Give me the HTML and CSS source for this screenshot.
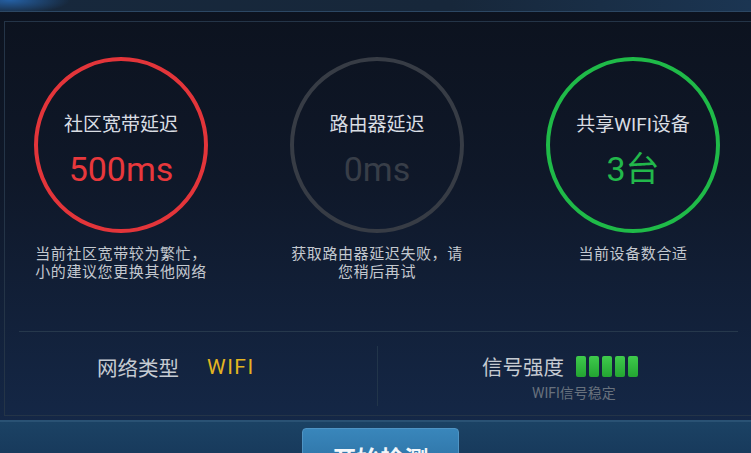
FILE: index.html
```html
<!DOCTYPE html>
<html lang="zh-CN">
<head>
    <meta charset="UTF-8">
    <meta name="viewport" content="width=device-width, initial-scale=1.0">
    <title>网络检测</title>
    <link rel="stylesheet" href="styles.css">
</head>
<body>
    <div class="topbar"></div>

    <div class="panel">
        <div class="gauges">
            <div class="gauge">
                <div class="ring ring-red">
                    <span class="ring-title">社区宽带延迟</span>
                    <span class="ring-value">500ms</span>
                </div>
                <p class="gauge-desc">当前社区宽带较为繁忙，<br>小的建议您更换其他网络</p>
            </div>
            <div class="gauge">
                <div class="ring ring-grey">
                    <span class="ring-title">路由器延迟</span>
                    <span class="ring-value">0ms</span>
                </div>
                <p class="gauge-desc">获取路由器延迟失败，请<br>您稍后再试</p>
            </div>
            <div class="gauge">
                <div class="ring ring-green">
                    <span class="ring-title">共享WIFI设备</span>
                    <span class="ring-value">3台</span>
                </div>
                <p class="gauge-desc">当前设备数合适</p>
            </div>
        </div>

        <div class="divider"></div>

        <div class="info-row">
            <div class="info-cell info-type">
                <span class="info-label">网络类型</span>
                <span class="info-value">WIFI</span>
            </div>
            <div class="info-sep"></div>
            <div class="info-cell info-signal">
                <div class="signal-line">
                    <span class="info-label">信号强度</span>
                    <span class="bars">
                        <i></i><i></i><i></i><i></i><i></i>
                    </span>
                </div>
                <span class="signal-note">WIFI信号稳定</span>
            </div>
        </div>
    </div>

    <div class="footer">
        <button class="start-btn">开始检测</button>
    </div>
</body>
</html>
```

FILE: styles.css
```css
body {
    margin: 0;
    width: 751px;
    height: 453px;
    overflow: hidden;
    font-family: Roboto, "Noto Sans CJK SC", sans-serif;
    background: linear-gradient(180deg, #0c121e 0%, #0f1829 40%, #15294a 100%);
}

.topbar {
    height: 11px;
    background:
        radial-gradient(ellipse 60px 14px at 10px 0, rgba(40, 110, 190, 0.8), transparent),
        linear-gradient(90deg, #17283c 0%, #17273a 60%, #1b3552 100%);
    border-bottom: 1px solid #2c4763;
    margin-bottom: 9px;
}

.panel {
    margin-left: 4px;
    width: 760px;
    height: 393px;
    border: 1px solid #243447;
    border-right: none;
}

/* circles */
.gauges {
    display: grid;
    grid-template-columns: 232px 232px 232px;
    column-gap: 24px;
    padding-top: 35px;
}

.gauge {
    display: flex;
    flex-direction: column;
    align-items: center;
}

.ring {
    width: 174px;
    height: 176px;
    box-sizing: border-box;
    border: 4px solid;
    border-radius: 50%;
    display: flex;
    flex-direction: column;
    align-items: center;
    padding-top: 52px;
}

.ring-red { border-color: #e3353a; }
.ring-grey { border-color: #373c45; }
.ring-green { border-color: #1fba48; }

.ring-title {
    font-size: 19px;
    line-height: 24px;
    color: #d9dde3;
}

.ring-value {
    font-size: 34px;
    line-height: 40px;
    margin-top: 12px;
}

.ring-red .ring-value { color: #e8383c; }
.ring-grey .ring-value { color: #383e48; }
.ring-green .ring-value { color: #22b84b; }

.gauge-desc {
    margin: 12px 0 0;
    font-size: 15px;
    line-height: 18px;
    letter-spacing: 0.6px;
    color: #c3c8cf;
    text-align: center;
}

.divider {
    height: 1px;
    margin: 50px 12px 0 14px;
    width: 719px;
    background: #26384c;
}

/* bottom info */
.info-row {
    display: flex;
    height: 81px;
}

.info-cell {
    display: flex;
    align-items: center;
}

.info-type {
    width: 372px;
    padding-left: 92px;
    box-sizing: border-box;
    padding-bottom: 11px;
}

.info-label {
    font-size: 20.5px;
    color: #c6cbd2;
}

.info-value {
    font-size: 21px;
    letter-spacing: 1.5px;
    color: #e3b421;
    margin-left: 28px;
}

.info-sep {
    width: 1px;
    margin: 14px 0 7px;
    background: #22354a;
}

.info-signal {
    flex-direction: column;
    align-items: flex-start;
    padding-left: 104px;
    padding-top: 22px;
}

.signal-line {
    display: flex;
    align-items: center;
    height: 24px;
}

.bars {
    display: flex;
    gap: 3px;
    margin-left: 12px;
}

.bars i {
    display: block;
    width: 10px;
    height: 21px;
    border-radius: 2px;
    background: linear-gradient(180deg, #3fcb4c, #23a532);
}

.signal-note {
    margin: 4px 0 0 50px;
    font-size: 14px;
    color: #68717d;
}

/* footer */
.footer {
    margin-top: 4px;
    height: 40px;
    border-top: 2px solid #2a5274;
    background: linear-gradient(180deg, #1b4264, #17385a);
    display: flex;
    padding-left: 302px;
}

.start-btn {
    margin-top: 6px;
    width: 157px;
    height: 50px;
    border: 1px solid #4f94c4;
    border-radius: 4px 4px 0 0;
    background: linear-gradient(180deg, #3986bb, #2a6d9f);
    color: #f2f6fa;
    font-family: Roboto, "Noto Sans CJK SC", sans-serif;
    font-size: 24px;
    font-weight: 700;
    padding-top: 10px;
}
```
